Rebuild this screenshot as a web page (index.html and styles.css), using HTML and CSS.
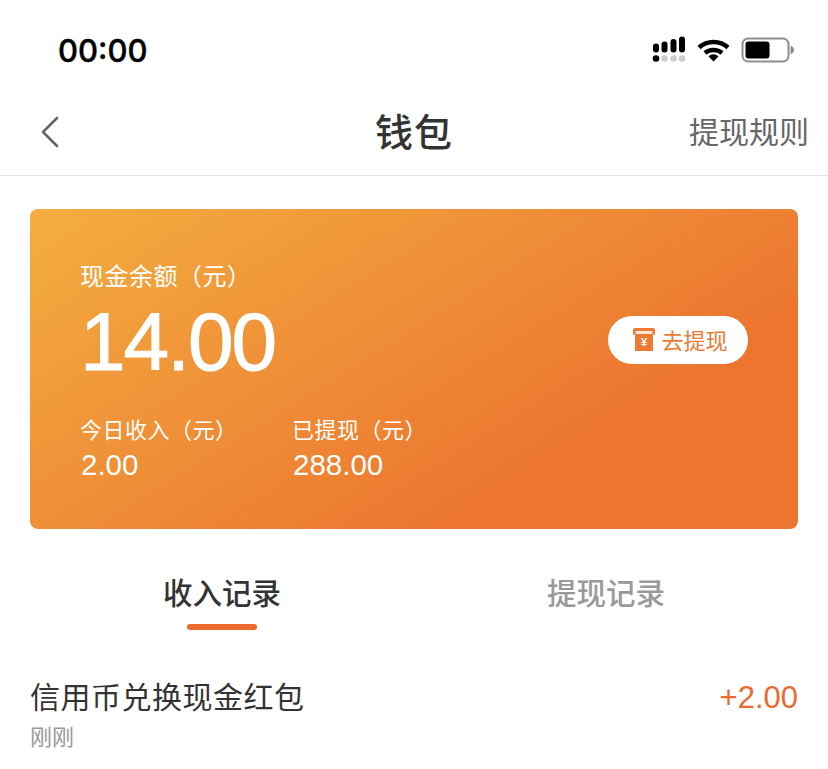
FILE: index.html
```html
<!DOCTYPE html>
<html lang="zh-CN">
<head>
  <meta charset="UTF-8">
  <meta name="viewport" content="width=device-width, initial-scale=1.0">
  <title>钱包</title>
  <link rel="stylesheet" href="styles.css">
</head>
<body>
  <div class="status-bar">
    <span class="time">00:00</span>
    <div class="status-icons">
      <svg class="signal" width="34" height="28" viewBox="0 0 34 28">
        <rect x="1" y="7.500" width="6" height="9" rx="3" fill="#000"/>
        <rect x="9.500" y="5.500" width="6" height="11" rx="3" fill="#000"/>
        <rect x="18.500" y="3" width="6" height="13.500" rx="3" fill="#000"/>
        <rect x="27" y="0.500" width="6" height="16" rx="3" fill="#000"/>
        <circle cx="4" cy="22.500" r="3.300" fill="#000"/>
        <circle cx="12.500" cy="22.500" r="3.300" fill="#ccc"/>
        <circle cx="21.500" cy="22.500" r="3.300" fill="#ccc"/>
        <circle cx="30" cy="22.500" r="3.300" fill="#ccc"/>
      </svg>
      <svg class="wifi" width="33" height="24" viewBox="0 0 33 24">
        <path d="M2 9.500C10 2 23 2 31 9.500" fill="none" stroke="#000" stroke-width="4.500"/>
        <path d="M8 15C12.500 11 20.500 11 25 15" fill="none" stroke="#000" stroke-width="4.500"/>
        <path d="M11.500 18.500C14.500 15.500 18.500 15.500 21.500 18.500L16.500 23.500Z" fill="#000"/>
      </svg>
      <svg class="battery" width="53" height="26" viewBox="0 0 53 26">
        <rect x="1.500" y="1.500" width="46" height="23" rx="5.500" fill="#fff" stroke="#8e8e8e" stroke-width="2"/>
        <rect x="4.500" y="4.500" width="24" height="17" rx="3" fill="#000"/>
        <path d="M49.500 9C52 9.500 53 11 53 13C53 15 52 16.500 49.500 17Z" fill="#8e8e8e"/>
      </svg>
    </div>
  </div>

  <div class="nav-bar">
    <svg class="back" width="20" height="32" viewBox="0 0 20 32">
      <path d="M17 2L3 16L17 30" fill="none" stroke="#666" stroke-width="2.600" stroke-linecap="round" stroke-linejoin="round"/>
    </svg>
    <h1 class="nav-title">钱包</h1>
    <a class="nav-link">提现规则</a>
  </div>

  <div class="content">
    <div class="wallet-card">
      <div class="card-label">现金余额（元）</div>
      <div class="balance-row">
        <div class="balance">14.00</div>
        <button class="withdraw-btn">
          <svg width="24" height="25" viewBox="0 0 24 25">
            <path d="M1 3Q1 1 3 1H21Q23 1 23 3V7.500H21V24H3V7.500H1Z" fill="#ed7a31"/>
            <rect x="3.500" y="4" width="17" height="3" fill="#fbe3d0"/>
            <text x="12" y="19" class="yen">¥</text>
          </svg>
          去提现
        </button>
      </div>
      <div class="stats">
        <div class="stat">
          <div class="stat-label">今日收入（元）</div>
          <div class="stat-value">2.00</div>
        </div>
        <div class="stat">
          <div class="stat-label">已提现（元）</div>
          <div class="stat-value">288.00</div>
        </div>
      </div>
    </div>

    <div class="tabs">
      <div class="tab active">收入记录</div>
      <div class="tab">提现记录</div>
    </div>

    <div class="record">
      <div>
        <div class="record-title">信用币兑换现金红包</div>
        <div class="record-time">刚刚</div>
      </div>
      <div class="record-amount">+2.00</div>
    </div>
  </div>
</body>
</html>
```

FILE: styles.css
```css
* {
  box-sizing: border-box;
}

html,
body {
  height: 769px;
  overflow: hidden;
}

body {
  margin: 0;
  background-color: #fff;
  font-family: "Liberation Sans", "Noto Sans CJK SC", sans-serif;
  color: #333;
}

.status-bar {
  height: 88px;
  padding: 12px 34px 0 58px;
  display: flex;
  align-items: center;
  justify-content: space-between;
}

.time {
  font-family: Inter, "Liberation Sans", sans-serif;
  font-size: 31px;
  font-weight: 500;
  color: #000;
  -webkit-text-stroke: 0.4px #000;
}

.status-icons {
  display: flex;
  align-items: center;
  gap: 11px;
}

.nav-bar {
  position: relative;
  height: 88px;
  padding: 0 19px 0 40px;
  display: flex;
  align-items: center;
  justify-content: space-between;
  border-bottom: 1px solid #e5e5e5;
}

.nav-title {
  position: absolute;
  left: 0;
  right: 0;
  margin: 0 0 4px;
  text-align: center;
  font-size: 38px;
  font-weight: 500;
  letter-spacing: 1px;
  color: #333;
}

.nav-link {
  margin-bottom: 4px;
  font-size: 30px;
  color: #666;
}

.content {
  padding: 33px 30px 0;
}

.wallet-card {
  height: 320px;
  padding: 53px 50px 0;
  border-radius: 8px;
  background: linear-gradient(148deg, #f3ae40 0%, #ec7630 72%, #ec7630 100%);
  color: #fff;
}

.card-label {
  font-size: 24px;
  line-height: 30px;
  letter-spacing: 0.5px;
  color: #fff;
}

.balance-row {
  margin-top: 2px;
  display: flex;
  align-items: center;
  justify-content: space-between;
}

.balance {
  font-size: 82px;
  line-height: 96px;
  letter-spacing: -2px;
  -webkit-text-stroke: 1px #fff;
}

.withdraw-btn {
  width: 140px;
  height: 48px;
  margin-bottom: 4px;
  border: none;
  border-radius: 24px;
  background-color: #fff;
  color: #ed7a31;
  font-family: inherit;
  font-size: 22px;
  display: flex;
  align-items: center;
  justify-content: center;
  gap: 5px;
  padding: 0 0 2px 4px;
}

.yen {
  font-size: 11px;
  font-weight: 700;
  text-anchor: middle;
  fill: #fff;
}

.stats {
  margin-top: 26px;
  display: flex;
}

.stat {
  width: 212px;
}

.stat-label {
  font-size: 22px;
  line-height: 30px;
  letter-spacing: 0.5px;
}

.stat-value {
  margin-top: 1px;
  padding-left: 1px;
  font-size: 29.500px;
  line-height: 36px;
}

.tabs {
  margin-top: 41px;
  display: flex;
}

.tab {
  position: relative;
  width: 384px;
  height: 60px;
  text-align: center;
  font-size: 29.500px;
  line-height: 48px;
  font-weight: 500;
  color: #999;
}

.tab.active {
  color: #333;
}

.tab.active::after {
  content: "";
  position: absolute;
  left: 50%;
  bottom: 0;
  width: 70px;
  height: 6px;
  margin-left: -35px;
  border-radius: 3px;
  background-color: #ec6a2e;
}

.record {
  margin-top: 49px;
  display: flex;
  align-items: flex-start;
  justify-content: space-between;
}

.record-title {
  font-size: 30px;
  line-height: 38px;
  letter-spacing: 0.5px;
  color: #333;
}

.record-time {
  margin-top: 7px;
  font-size: 22px;
  line-height: 28px;
  color: #999;
}

.record-amount {
  font-size: 31px;
  line-height: 38px;
  color: #ec6a2e;
}
```
